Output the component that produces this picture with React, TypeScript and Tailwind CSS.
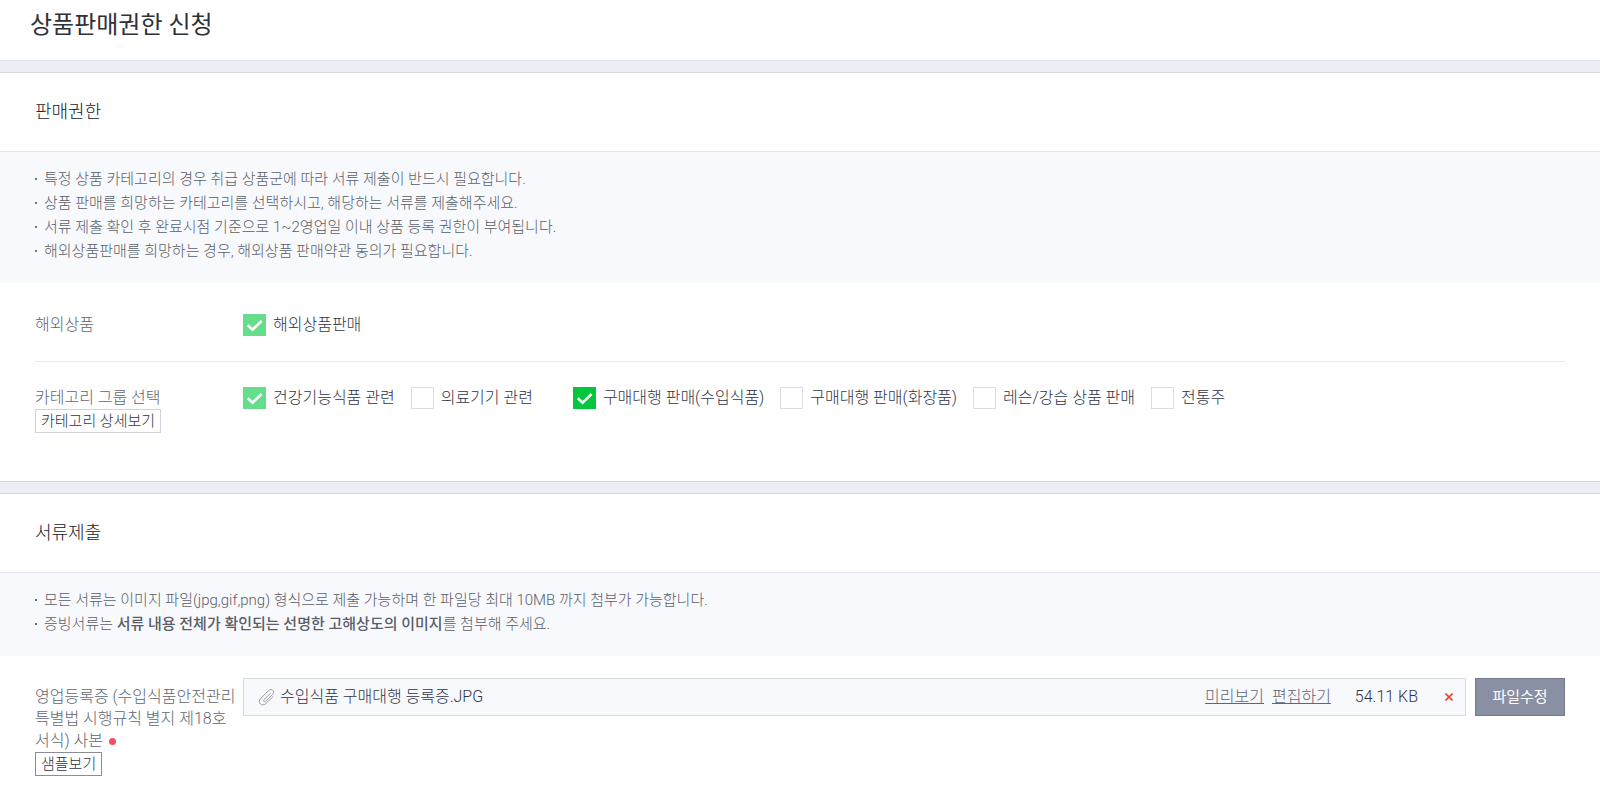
import { ReactNode, useState } from 'react';

interface CategoryOption {
  id: string;
  label: string;
  checked?: boolean;
  locked?: boolean;
  wide?: boolean;
}

const CATEGORIES: CategoryOption[] = [
  { id: 'health', label: '건강기능식품 관련', checked: true, locked: true },
  { id: 'medical', label: '의료기기 관련', wide: true },
  { id: 'import-food', label: '구매대행 판매(수입식품)', checked: true },
  { id: 'import-cosmetic', label: '구매대행 판매(화장품)' },
  { id: 'lesson', label: '레슨/강습 상품 판매' },
  { id: 'liquor', label: '전통주' },
];

function CheckOption({ id, label, checked = false, locked = false, wide = false }: CategoryOption) {
  const [on, setOn] = useState(checked);
  const boxClass = on
    ? locked
      ? 'bg-[#66dd8b]'
      : 'bg-[#00c73c]'
    : 'bg-white border border-[#dbdde2]';

  return (
    <label htmlFor={id} className={`flex items-start ${wide ? 'mr-6' : ''}`}>
      <input
        id={id}
        type="checkbox"
        checked={on}
        disabled={locked}
        onChange={() => setOn(!on)}
        className="sr-only"
      />
      <span className={`flex h-[22px] w-[23px] items-center justify-center ${boxClass}`}>
        {on && (
          <svg className="h-[22px] w-[23px]" viewBox="0 0 23 22" fill="none" stroke="#fff" strokeWidth={2.6}>
            <path d="M4.8 11.2L9.6 15.6L18.6 7" />
          </svg>
        )}
      </span>
      <span className="ml-[7px] text-base leading-[22px] text-[#303446]">{label}</span>
    </label>
  );
}

function Section({ title, notes, children }: { title: string; notes: ReactNode[]; children: ReactNode }) {
  return (
    <section className="border-y border-[#d5d8dd] bg-white">
      <h2 className="border-b border-[#e2e5e9] px-[35px] py-[25px] text-lg leading-7 text-[#202028]">{title}</h2>
      <ul className="bg-[#f8f9fd] px-[35px] pt-[15px] pb-5 text-[15px] leading-6 text-[#5a5e67]">
        {notes.map((note, i) => (
          <li key={i} className="flex items-center">
            <span className="mr-[7px] h-[2px] w-[2px] bg-[#70747d]" />
            <span>{note}</span>
          </li>
        ))}
      </ul>
      <div className="px-[35px]">{children}</div>
    </section>
  );
}

function Row({ label, children }: { label: ReactNode; children: ReactNode }) {
  return (
    <div className="flex items-start">
      <div className="w-[208px] shrink-0 text-base leading-[22px] text-[#62666f]">{label}</div>
      {children}
    </div>
  );
}

export default function App() {
  return (
    <div className="min-h-screen bg-white font-['Roboto','Noto_Sans_CJK_KR',sans-serif] font-light break-all">
      <header className="px-[30px] pt-[9px] pb-[19px]">
        <h1 className="text-2xl leading-8 font-normal text-[#303038]">상품판매권한 신청</h1>
      </header>

      <main className="flex flex-col gap-[11px] border-t border-[#e0e4ea] bg-[#ebeff4] pt-[11px]">
        <Section
          title="판매권한"
          notes={[
            '특정 상품 카테고리의 경우 취급 상품군에 따라 서류 제출이 반드시 필요합니다.',
            '상품 판매를 희망하는 카테고리를 선택하시고, 해당하는 서류를 제출해주세요.',
            '서류 제출 확인 후 완료시점 기준으로 1~2영업일 이내 상품 등록 권한이 부여됩니다.',
            '해외상품판매를 희망하는 경우, 해외상품 판매약관 동의가 필요합니다.',
          ]}
        >
          <div className="border-b border-[#e8eaed] pt-[31px] pb-[25px]">
            <Row label="해외상품">
              <CheckOption id="overseas" label="해외상품판매" checked locked />
            </Row>
          </div>
          <div className="pt-[25px] pb-12">
            <Row
              label={
                <>
                  <div>카테고리 그룹 선택</div>
                  <button className="block h-6 border border-[#d0d3da] px-[5px] text-[15px] leading-5 text-[#303446]">
                    카테고리 상세보기
                  </button>
                </>
              }
            >
              <div className="flex flex-wrap gap-x-4 gap-y-2">
                {CATEGORIES.map((category) => (
                  <CheckOption key={category.id} {...category} />
                ))}
              </div>
            </Row>
          </div>
        </Section>

        <Section
          title="서류제출"
          notes={[
            '모든 서류는 이미지 파일(jpg,gif,png) 형식으로 제출 가능하며 한 파일당 최대 10MB 까지 첨부가 가능합니다.',
            <>
              증빙서류는 <strong className="font-medium">서류 내용 전체가 확인되는 선명한 고해상도의 이미지</strong>를 첨부해 주세요.
            </>,
          ]}
        >
          <div className="pt-[22px] pb-5">
            <Row
              label={
                <div className="pt-2">
                  <div>
                    영업등록증 (수입식품안전관리특별법 시행규칙 별지 제18호 서식) 사본
                    <span className="ml-1.5 inline-block h-[7px] w-[7px] rounded-full bg-[#f2505f] align-[1px]" />
                  </div>
                  <button className="block h-6 border border-[#8a8d98] px-[5px] text-[15px] leading-5 text-[#303446]">
                    샘플보기
                  </button>
                </div>
              }
            >
              <div className="flex min-w-0 flex-1 gap-[9px]">
                <div className="flex h-[38px] flex-1 items-center border border-[#d7dbe1] bg-[#f8f9fd] pr-3 pl-3.5 text-base leading-6 text-[#303446]">
                  <svg className="mr-1 h-[18px] w-[18px]" viewBox="0 0 18 18" fill="none" stroke="#9a9da5" strokeWidth={1} strokeLinecap="round" strokeLinejoin="round">
                    <path d="M12.6 5.2L6 11.7C4.7 13 6.2 14.6 7.6 13.3L14.6 6.4C17.3 3.6 13.8-.2 10.8 2.4L2.6 10.5C-1 14.4 3.8 19.2 7.8 15.6L14.9 8.7" />
                  </svg>
                  <span className="flex-1">수입식품 구매대행 등록증.JPG</span>
                  <a href="#preview" className="mr-2 text-[#62666f] underline">미리보기</a>
                  <a href="#edit" className="mr-6 text-[#62666f] underline">편집하기</a>
                  <span className="mr-[27px]">54.11 KB</span>
                  <button aria-label="파일 삭제">
                    <svg className="h-2 w-2" viewBox="0 0 8 8" fill="none" stroke="#e8443a" strokeWidth={1.6}>
                      <path d="M.5 .5L7.5 7.5M7.5 .5L.5 7.5" />
                    </svg>
                  </button>
                </div>
                <button className="h-[38px] w-[90px] border border-[#747b8c] bg-[#8990a3] text-[15px] font-normal text-white">
                  파일수정
                </button>
              </div>
            </Row>
          </div>
        </Section>
      </main>
    </div>
  );
}
